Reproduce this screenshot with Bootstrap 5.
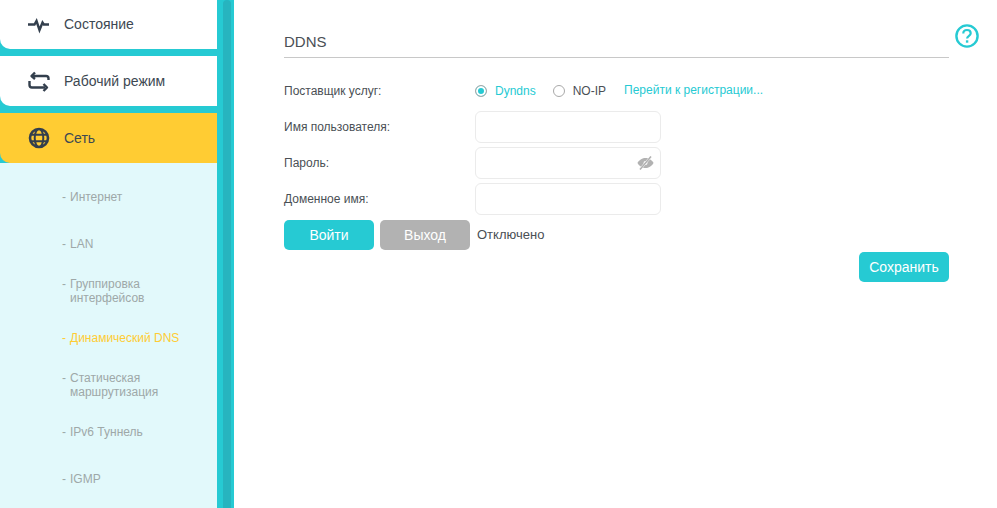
<!DOCTYPE html>
<html lang="ru">
<head>
<meta charset="utf-8">
<title>DDNS</title>
<link href="https://cdn.jsdelivr.net/npm/bootstrap@5.3.0/dist/css/bootstrap.min.css" rel="stylesheet">
<style>
html,body{height:508px;overflow:hidden;background:#fff}
body{font-family:"Liberation Sans",Arial,sans-serif;font-size:12px;color:#4a4f55}
.shell{height:508px}
.side{width:234px;flex:none;background:#26cad3;position:relative}
.side-in{width:217px}
.rail{width:8px;background:#27b4bf;position:absolute;left:223px;top:0;bottom:0;border-radius:4px 4px 0 0}
.top-item{height:50px;background:#fff;border-bottom-left-radius:10px;margin-bottom:7px;font-size:14px;color:#3d4852;padding-left:28px;gap:14px}
.top-item.first{height:49px}
.top-item.on{background:#ffcc33;margin-bottom:0}
.ico{width:22px;height:22px;flex:none;color:#333f4d}
.subs{background:#e2f9fb;padding-top:10px;height:345px;list-style:none;margin:0;padding-left:0}
.subs li{height:47px;padding-left:62px;color:#9ea8a8;line-height:14px}
.subs li.on{color:#ffcc33}
.dash{width:8px;flex:none}
.main{padding:0 48px 0 50px;position:relative}
.ttl{height:58px;padding-top:33px;font-size:15px;line-height:18px;border-bottom:1px solid #c8c8c8;color:#4a4f55}
.frow{height:32px;margin-bottom:4px}
.flabel{width:191px;flex:none;color:#4a4f55}
.radios{height:32px;margin-top:17px;margin-bottom:4px}
.rd{width:12px;height:12px;border:1px solid #a9a9a9;border-radius:50%;flex:none;background:#fff}
.rd.sel{background:#26cad3;box-shadow:inset 0 0 0 2px #fff}
.rd-two{margin-left:17px;margin-right:8px}
.tealt{color:#26cad3;text-decoration:none}
.reg{margin-left:18px;margin-top:-2px}
.fld{width:186px;height:32px;border:1px solid #ebebeb;border-radius:6px;background:#fff;position:relative}
.eye{position:absolute;right:6px;top:8px;width:17px;height:14px}
.bt{width:90px;height:30px;border:0;border-radius:5px;color:#fff;font-size:14px;line-height:30px;padding:0;font-family:inherit}
.bt-teal{background:#26cad3}
.bt-grey{background:#b2b2b2}
.btns{margin-top:5px;gap:6px}
.state{margin-left:1px;color:#4a4f55;font-size:13px}
.saverow{margin-top:2px}
.help{position:absolute;right:18px;top:24px;width:24px;height:24px}
</style>
</head>
<body>
<div class="shell d-flex">
  <aside class="side">
    <div class="rail"></div>
    <div class="side-in">
      <div class="top-item first d-flex align-items-center">
        <svg class="ico" viewBox="0 0 22 22" fill="none" stroke="currentColor" stroke-width="2.400"><path d="M0 10.500H6.500L8.500 7 11.500 16 14.500 8.500 15.800 10.500H21"/></svg>
        <span>Состояние</span>
      </div>
      <div class="top-item d-flex align-items-center">
        <svg class="ico" viewBox="0 0 22 22" fill="none" stroke="currentColor" stroke-width="2.400" stroke-linejoin="round"><path d="M5 6H18Q20.500 6 20.500 8.500V10M1.500 11V15Q1.500 17.500 4 17.500H17"/><path d="M7 2.500 3.500 6 7 9M15.500 14 19 17.500 15.500 21"/></svg>
        <span>Рабочий режим</span>
      </div>
      <div class="top-item on d-flex align-items-center">
        <svg class="ico" viewBox="0 0 22 22" fill="none" stroke="currentColor" stroke-width="2.600"><circle cx="11" cy="11" r="9"/><ellipse cx="11" cy="11" rx="4.300" ry="9" stroke-width="2"/><path d="M2.500 7.700H19.500M2.500 14.300H19.500" stroke-width="2"/></svg>
        <span>Сеть</span>
      </div>
      <ul class="subs">
        <li class="d-flex align-items-center"><span class="d-flex"><span class="dash">-</span><span>Интернет</span></span></li>
        <li class="d-flex align-items-center"><span class="d-flex"><span class="dash">-</span><span>LAN</span></span></li>
        <li class="d-flex align-items-center"><span class="d-flex"><span class="dash">-</span><span>Группировка<br>интерфейсов</span></span></li>
        <li class="on d-flex align-items-center"><span class="d-flex"><span class="dash">-</span><span>Динамический DNS</span></span></li>
        <li class="d-flex align-items-center"><span class="d-flex"><span class="dash">-</span><span>Статическая<br>маршрутизация</span></span></li>
        <li class="d-flex align-items-center"><span class="d-flex"><span class="dash">-</span><span>IPv6 Туннель</span></span></li>
        <li class="d-flex align-items-center"><span class="d-flex"><span class="dash">-</span><span>IGMP</span></span></li>
      </ul>
    </div>
  </aside>
  <main class="main flex-grow-1">
    <div class="ttl">DDNS</div>
    <div class="radios d-flex align-items-center">
      <div class="flabel">Поставщик услуг:</div>
      <span class="rd sel"></span><span class="tealt ms-2">Dyndns</span>
      <span class="rd rd-two"></span><span>NO-IP</span>
      <a class="tealt reg" href="#">Перейти к регистрации...</a>
    </div>
    <div class="frow d-flex align-items-center"><div class="flabel">Имя пользователя:</div><div class="fld"></div></div>
    <div class="frow d-flex align-items-center"><div class="flabel">Пароль:</div><div class="fld">
      <svg class="eye" viewBox="0 0 17 14" fill="#b2b2b2"><path d="M8.500 2C4.500 2 1.500 4.700 0.500 7 1.500 9.300 4.500 12 8.500 12S15.500 9.300 16.500 7C15.500 4.700 12.500 2 8.500 2Z"/><circle cx="8.500" cy="7" r="2" fill="#fff"/><path d="M3 13.500 14 0.500" stroke="#fff" stroke-width="2.200"/><path d="M3 13.500 14 0.500" stroke="#b2b2b2" stroke-width="1.600"/></svg>
    </div></div>
    <div class="frow d-flex align-items-center"><div class="flabel">Доменное имя:</div><div class="fld"></div></div>
    <div class="btns d-flex align-items-center">
      <button type="button" class="bt bt-teal">Войти</button>
      <button type="button" class="bt bt-grey">Выход</button>
      <span class="state">Отключено</span>
    </div>
    <div class="saverow d-flex justify-content-end"><button type="button" class="bt bt-teal">Сохранить</button></div>
    <svg class="help" viewBox="0 0 24 24" fill="none" stroke="#26cad3" stroke-width="2.400"><circle cx="12" cy="12" r="10.600"/><path d="M8.300 9.500C8.300 7.300 10 6 12 6S15.700 7.300 15.700 9.300C15.700 11.800 12.100 11.800 12.100 14.600" stroke-width="2.200"/><path d="M12.100 16.300V18.700" stroke-width="2.400"/></svg>
  </main>
</div>
<script src="https://cdn.jsdelivr.net/npm/bootstrap@5.3.0/dist/js/bootstrap.bundle.min.js"></script>
</body>
</html>
